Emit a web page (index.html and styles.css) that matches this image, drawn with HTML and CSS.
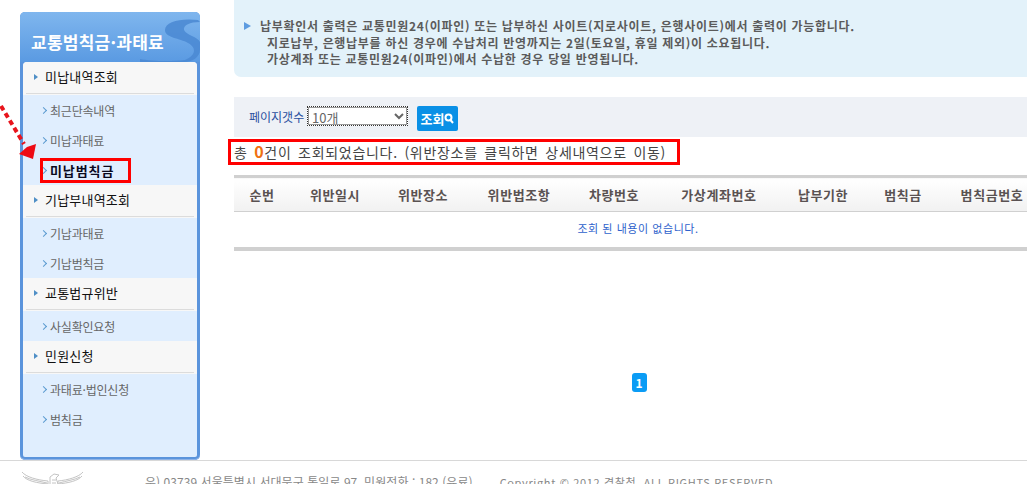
FILE: index.html
```html
<!DOCTYPE html>
<html lang="ko">
<head>
<meta charset="utf-8">
<title>교통범칙금·과태료</title>
<link rel="stylesheet" href="styles.css">
</head>
<body>
<div class="layout">
  <aside class="side">
    <div class="side-title">
      <svg class="side-s" width="60" height="50" viewBox="0 0 60 50"><path d="M58 8C40 6 25 10 25 18C25 26 40 26 48 31C56 35 57 43 45 48C30 50 10 49 0 47L0 50L45 50C52 50 60 45 60 38L60 30C58 25 46 23 44 18C43 13 50 10 60 10Z" fill="#4a88d2" opacity=".85"/></svg>
      <span class="side-title-text">교통범칙금·과태료</span>
    </div>
    <nav class="menu">
      <div class="head head-first"><i class="tri"></i>미납내역조회</div>
      <ul class="subs">
        <li><i class="chev"></i>최근단속내역</li>
        <li><i class="chev"></i>미납과태료</li>
        <li class="current"><i class="chev"></i><span class="current-box">미납범칙금</span></li>
      </ul>
      <div class="head"><i class="tri"></i>기납부내역조회</div>
      <ul class="subs">
        <li><i class="chev"></i>기납과태료</li>
        <li><i class="chev"></i>기납범칙금</li>
      </ul>
      <div class="head"><i class="tri"></i>교통법규위반</div>
      <ul class="subs">
        <li><i class="chev"></i>사실확인요청</li>
      </ul>
      <div class="head"><i class="tri"></i>민원신청</div>
      <ul class="subs">
        <li><i class="chev"></i>과태료·법인신청</li>
        <li><i class="chev"></i>범칙금</li>
      </ul>
    </nav>
  </aside>
  <main class="main">
    <section class="notice">
      <p class="notice-first"><i class="notice-tri"></i>납부확인서 출력은 교통민원24(이파인) 또는 납부하신 사이트(지로사이트, 은행사이트)에서 출력이 가능합니다.</p>
      <p>지로납부, 은행납부를 하신 경우에 수납처리 반영까지는 2일(토요일, 휴일 제외)이 소요됩니다.</p>
      <p>가상계좌 또는 교통민원24(이파인)에서 수납한 경우 당일 반영됩니다.</p>
    </section>
    <section class="search">
      <label class="search-label" for="cnt">페이지갯수</label>
      <select class="search-select" id="cnt"><option>10개</option></select>
      <button class="search-btn" type="button">조회<svg width="10" height="11" viewBox="0 0 10 11"><circle cx="4.5" cy="4.5" r="3" fill="none" stroke="#fff" stroke-width="2"/><path d="M6.5 7L9 10" stroke="#fff" stroke-width="2"/></svg></button>
    </section>
    <div class="result">총 <b class="count">0</b>건이 조회되었습니다. (위반장소를 클릭하면 상세내역으로 이동)</div>
    <table class="grid">
      <colgroup>
        <col class="c1"><col class="c2"><col class="c3"><col class="c4"><col class="c5"><col class="c6"><col class="c7"><col class="c8"><col class="c9">
      </colgroup>
      <thead>
        <tr><th>순번</th><th>위반일시</th><th>위반장소</th><th>위반법조항</th><th>차량번호</th><th>가상계좌번호</th><th>납부기한</th><th>범칙금</th><th>범칙금번호</th></tr>
      </thead>
      <tbody>
        <tr><td class="empty-cell" colspan="9">조회 된 내용이 없습니다.</td></tr>
      </tbody>
    </table>
    <div class="pager"><a class="page">1</a></div>
  </main>
</div>
<footer class="footer">
  <svg class="eagle" width="64" height="14" viewBox="0 0 64 14"><g fill="none" stroke="#c4c4c4" stroke-width="1"><path d="M1 1C5 6 16 9 27 10L27 13C16 12 6 10 2 5M4 6C10 9 18 10 26 12"/><path d="M62 1C58 6 47 9 37 10L37 13C47 12 57 10 61 5M59 6C53 9 45 10 38 12"/><path d="M29 13L29 6L33 3L38 4L35 7L37 13M31 9L35 9M31 12L35 12"/></g></svg>
  <span class="addr">우) 03739 서울특별시 서대문구 통일로 97, 민원전화 : 182 (유료)</span>
  <span class="copy">Copyright © 2012 경찰청. ALL RIGHTS RESERVED</span>
</footer>
<svg class="mark-arrow" width="40" height="60" viewBox="0 0 40 60"><path d="M1 3L24 41" stroke="#e8141c" stroke-width="4" stroke-dasharray="5 3.5" fill="none"/><path d="M19 51L27 44L36 41L33 56Z" fill="#ee0a14"/></svg>
<div class="mark-box"></div>
</body>
</html>
```

FILE: styles.css
```css
* { box-sizing: border-box; }
html, body { margin: 0; padding: 0; }
body {
  width: 1027px;
  height: 484px;
  overflow: hidden;
  position: relative;
  background: #fff;
  font-family: "Noto Sans CJK KR", "Noto Sans", sans-serif;
  font-size: 12px;
  color: #555;
}
p, ul { margin: 0; padding: 0; }
ul { list-style: none; }
i { display: block; }

.layout { display: flex; height: 460px; align-items: flex-start; }

.side {
  width: 180px;
  height: 448px;
  margin: 12px 0 0 20px;
  flex: none;
  display: flex;
  flex-direction: column;
  background: #5b94dc;
  border-radius: 5px;
  padding: 0 3px 3px;
  box-shadow: inset 0 -1px 0 #8fb3e6;
}
.side-title {
  height: 50px;
  flex: none;
  margin: 0 -3px;
  padding-left: 11px;
  display: flex;
  align-items: center;
  position: relative;
  overflow: hidden;
  border-radius: 5px 5px 0 0;
  background: linear-gradient(#7fb6ee, #5a9ae2);
  color: #fff;
  font-size: 17px;
  font-weight: 700;
  padding-top: 8px;
}
.side-s { position: absolute; left: 120px; top: 0; }
.side-title-text { position: relative; letter-spacing: .25px; white-space: nowrap; }

.menu {
  flex: 1;
  background: #e0eefe;
  border-radius: 4px 4px 2px 2px;
  overflow: hidden;
}
.head {
  height: 33px;
  padding: 0 0 4px 11px;
  display: flex;
  align-items: center;
  gap: 7px;
  background: #f7f7f7;
  color: #111;
  font-size: 13px;
  position: relative;
  letter-spacing: .2px;
}
.head::after {
  content: "";
  position: absolute;
  left: 3px;
  right: 3px;
  bottom: 1px;
  height: 1px;
  background: #dcdcdc;
}
.tri {
  width: 0;
  height: 0;
  border-left: 4px solid #4f8fc6;
  border-top: 3px solid transparent;
  border-bottom: 3px solid transparent;
}
.subs li {
  height: 30px;
  padding-left: 18px;
  display: flex;
  align-items: center;
  gap: 3px;
  color: #666;
  font-size: 12px;
  letter-spacing: -.2px;
}
.chev {
  width: 5px;
  height: 5px;
  flex: none;
  border-top: 1px solid #5a9ad0;
  border-right: 1px solid #5a9ad0;
  transform: rotate(45deg);
  margin-right: 1px;
}
.subs .current { color: #0a0a1e; font-weight: 700; font-size: 13px; letter-spacing: .9px; }

.main { width: 793px; margin-left: 34px; flex: none; }

.notice {
  height: 77px;
  padding: 18px 0 0 10px;
  background: #e3f2fa;
  border-bottom-left-radius: 7px;
  font-size: 12px;
  font-weight: 700;
  color: #5b5b5b;
  line-height: 16.5px;
}
.notice p { padding-left: 23px; letter-spacing: .7px; white-space: nowrap; }
.notice .notice-first { padding-left: 16px; position: relative; }
.notice-tri {
  position: absolute;
  left: 0;
  top: 4px;
  width: 0;
  height: 0;
  border-left: 7px solid #5e9ce0;
  border-top: 4px solid transparent;
  border-bottom: 4px solid transparent;
}

.search {
  height: 40px;
  margin-top: 20px;
  padding: 9px 0 0 15px;
  background: #eef1f6;
  display: flex;
  align-items: flex-start;
}
.search-label {
  color: #2a4f9e;
  font-size: 12px;
  line-height: 21px;
  width: 58px;
}
.search-select {
  width: 101px;
  height: 20px;
  padding: 0;
  border: 1px dotted #333;
  outline: 1px solid #999;
  outline-offset: -2px;
  background: #fff;
  color: #666;
  font: 13px "Noto Sans CJK KR", sans-serif;
  border-radius: 0;
}
.search-btn {
  width: 41px;
  height: 25px;
  margin-left: 9px;
  padding: 0;
  border: 0;
  border-radius: 2px;
  background: #0a90e6;
  color: #fff;
  font: 700 13px "Noto Sans CJK KR", sans-serif;
  display: flex;
  align-items: center;
  justify-content: center;
  gap: 0;
}

.result {
  width: 452px;
  height: 26px;
  margin: 2px 0 0 -6px;
  border: 3px solid #f00;
  padding: 0 0 0 3px;
  background: #fff;
  font-size: 14px;
  line-height: 19px;
  color: #444;
  position: relative;
  letter-spacing: .7px;
  word-spacing: 2px;
  white-space: nowrap;
}
.count { color: #f07010; font-size: 16px; font-weight: 700; }

.grid {
  width: 808px;
  table-layout: fixed;
  border-collapse: collapse;
  margin-top: 10px;
  border-top: 3px solid #d0d0d0;
  border-bottom: 4px solid #d0d0d0;
}
.c1 { width: 56px; }
.c2 { width: 90px; }
.c3 { width: 86px; }
.c4 { width: 106px; }
.c5 { width: 84px; }
.c6 { width: 126px; }
.c7 { width: 82px; }
.c8 { width: 78px; }
.c9 { width: 100px; }
.grid th {
  height: 35px;
  padding: 0 0 1px;
  background: linear-gradient(#fff, #f1f1f1);
  border-bottom: 1px solid #d0d0d0;
  font-size: 13px;
  font-weight: 700;
  color: #5a5252;
  letter-spacing: .6px;
  white-space: nowrap;
}
.empty-cell {
  height: 37px;
  padding: 0 0 3px;
  text-align: center;
  color: #2e62cc;
  font-size: 11px;
  letter-spacing: .55px;
}

.pager {
  margin-top: 122px;
  display: flex;
  justify-content: center;
  padding-left: 17px;
}
.page {
  width: 15px;
  height: 19px;
  border-radius: 3px;
  background: #0b9cf5;
  color: #fff;
  font-size: 12px;
  font-weight: 700;
  line-height: 19px;
  text-align: center;
}

.footer {
  height: 24px;
  border-top: 1px solid #d8d8d8;
  position: relative;
  display: flex;
  padding: 10px 0 0 21px;
  color: #888;
  font-size: 12px;
  line-height: 22px;
  white-space: nowrap;
}
.eagle { flex: none; }
.addr { margin-left: 60px; letter-spacing: .05px; }
.copy { margin-left: 27px; font-size: 11px; letter-spacing: .65px; }

.mark-arrow { position: absolute; left: 0; top: 103px; }
.mark-box {
  position: absolute;
  left: 40px;
  top: 158px;
  width: 91px;
  height: 25px;
  border: 3px solid #f00;
}
```
